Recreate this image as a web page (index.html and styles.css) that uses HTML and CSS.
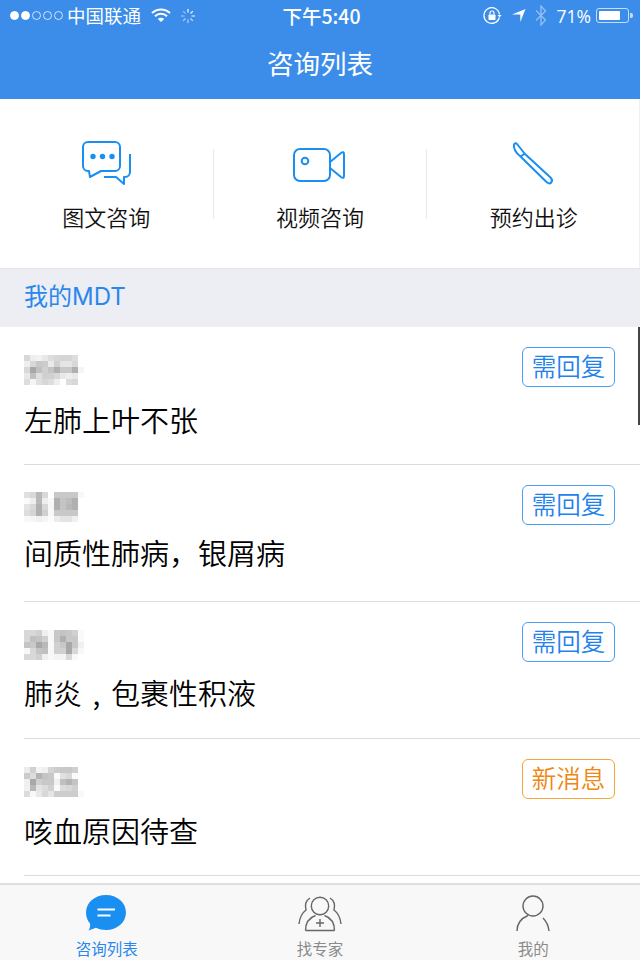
FILE: index.html
```html
<!DOCTYPE html>
<html lang="zh-CN">
<head>
    <meta charset="UTF-8">
    <meta name="viewport" content="width=device-width, initial-scale=1.0">
    <title>咨询列表</title>
    <link rel="stylesheet" href="styles.css">
</head>
<body>
    <header class="top-bar">
        <div class="status-bar">
            <div class="status-left">
                <div class="signal"><i class="on"></i><i class="on"></i><i></i><i></i><i></i></div>
                <span class="carrier">中国联通</span>
                <svg class="wifi" width="20" height="14" viewBox="0 0 20 14">
                    <path d="M1 5a13 13 0 0 1 18 0" fill="none" stroke="#fff" stroke-width="2"/>
                    <path d="M4 8.300a8.600 8.600 0 0 1 12 0" fill="none" stroke="#fff" stroke-width="2"/>
                    <path d="M6.800 11a4.600 4.600 0 0 1 6.400 0L10 14z" fill="#fff"/>
                </svg>
                <svg class="spinner" width="16" height="16" viewBox="0 0 16 16" stroke="#fff" stroke-width="1.200">
                    <path d="M8 1v3.500"/>
                    <path d="M12.900 3.100 10.500 5.500" opacity=".9"/>
                    <path d="M15 8h-3.500" opacity=".8"/>
                    <path d="M12.900 12.900 10.500 10.500" opacity=".7"/>
                    <path d="M8 15v-3.500" opacity=".65"/>
                    <path d="M3.100 12.900 5.500 10.500" opacity=".6"/>
                    <path d="M1 8h3.500" opacity=".5"/>
                    <path d="M3.100 3.100 5.500 5.500" opacity=".45"/>
                </svg>
            </div>
            <div class="status-time">下午5:40</div>
            <div class="status-right">
                <svg class="lock" width="19" height="18" viewBox="0 0 19 18" fill="none">
                    <path d="M16.300 10.500A7.800 7.800 0 1 1 16.500 7.500" stroke="#fff" stroke-width="1.300"/>
                    <path d="M14.600 8h4l-2 2.600z" fill="#fff"/>
                    <rect x="5.500" y="7.500" width="7" height="5.500" rx=".8" fill="#fff"/>
                    <path d="M7 7.500V6a2 2 0 0 1 4 0v1.500" stroke="#fff" stroke-width="1.200"/>
                </svg>
                <svg class="arrow" width="14" height="13" viewBox="0 0 14 13"><path d="M13.500 0 8.300 13V5.500H0z" fill="#fff"/></svg>
                <svg class="bluetooth" width="12" height="21" viewBox="0 0 12 21" fill="none"><path d="M1 5.500 10.500 15 6 20V1l4.500 5L1 15.500" stroke="#fff" stroke-width="1.300" opacity=".45"/></svg>
                <span class="battery-num">71%</span>
                <div class="battery"><div class="battery-fill"></div></div>
                <div class="battery-nub"></div>
            </div>
        </div>
        <h1 class="page-title">咨询列表</h1>
    </header>

    <nav class="actions">
        <a class="action">
            <svg width="52" height="46" viewBox="0 0 52 46" fill="none" stroke="#1a8ff2" stroke-width="2" stroke-linejoin="round">
                <path d="M7 1h27a5 5 0 0 1 5 5v19a5 5 0 0 1-5 5H20l-11 6-1-6H7a5 5 0 0 1-5-5V6a5 5 0 0 1 5-5z"/>
                <path d="M49 13v18a5 5 0 0 1-5 5h-1v7l-8-7H23"/>
                <circle cx="12" cy="15.500" r="2.700" fill="#1a8ff2" stroke="none"/>
                <circle cx="21.500" cy="15.500" r="2.700" fill="#1a8ff2" stroke="none"/>
                <circle cx="31" cy="15.500" r="2.700" fill="#1a8ff2" stroke="none"/>
            </svg>
            <span>图文咨询</span>
        </a>
        <a class="action">
            <svg width="54" height="36" viewBox="0 0 54 36" fill="none" stroke="#1a8ff2" stroke-width="2" stroke-linejoin="round">
                <rect x="2" y="2" width="36" height="32" rx="6"/>
                <circle cx="13" cy="14" r="3.300"/>
                <path d="M38 15 49 6c2-1.500 3-1 3 1.500v21c0 2.500-1 3-3 1.500L38 21"/>
            </svg>
            <span>视频咨询</span>
        </a>
        <a class="action">
            <svg width="44" height="46" viewBox="0 0 44 46" fill="none" stroke="#1a8ff2" stroke-width="2" stroke-linejoin="round">
                <path d="M2 3.500c.8-1.500 2-1.500 3-.5l8 10 25.500 23.500c2 2 2 3.500.7 5s-3 1-4.700-.5L8 15C4 12 1 7 2 3.500z"/>
                <path d="M8.500 15.500 13 12.500"/>
            </svg>
            <span>预约出诊</span>
        </a>
    </nav>

    <div class="section-head">我的MDT</div>

    <ul class="consult-list">
        <li class="consult">
            <div class="mosaic" data-cells="d8 ee f2 e8 dd d8 d5 d5 dd ff|ee d8 c8 cc ea d0 e5 e5 d8 ff|d8 a8 c0 d0 c4 b0 c8 c8 b0 f5|e8 c0 e0 d0 d0 d8 e8 ee e8 ff|dd f5 e0 d8 dd ee ff dd d8 ff"></div>
            <p class="consult-title">左肺上叶不张</p>
            <span class="tag">需回复</span>
        </li>
        <li class="consult">
            <div class="mosaic" data-cells="e0 d8 b8 d8 ff c8 c8 c8 c8 f8|fa ee b8 ee f8 b0 c4 bc b0 ff|e4 d8 b0 d8 f8 b0 c4 b8 b0 ff|dd d4 b0 d0 f8 c8 c8 c8 c8 ff|f8 f5 f0 f5 fc ec e4 e4 f0 ff"></div>
            <p class="consult-title">间质性肺病，银屑病</p>
            <span class="tag">需回复</span>
        </li>
        <li class="consult">
            <div class="mosaic" data-cells="d8 d8 d0 f0 f8 c8 c4 c8 d0 fa|d8 c0 c4 d0 f8 c8 b0 c8 c8 fa|c4 c8 a8 b8 f8 d0 c8 a8 c8 f0|f8 d8 c4 c0 f8 d0 d0 a8 d8 f8|d8 d8 d0 f0 f8 f4 f4 d8 f8 ff"></div>
            <p class="consult-title">肺炎<span class="comma-mid">,</span>包裹性积液</p>
            <span class="tag">需回复</span>
        </li>
        <li class="consult">
            <div class="mosaic" data-cells="ec d0 f4 f0 d4 cc c8 c8 d0 ff|cc dc b4 c4 c8 fa e0 d8 fa ff|f0 a8 d0 c8 c8 f0 c0 b4 c4 ff|f0 b8 e4 dc d0 fa dc d8 d0 ff|dc f8 e8 d8 e4 cc cc cc cc f8"></div>
            <p class="consult-title">咳血原因待查</p>
            <span class="tag tag-new">新消息</span>
        </li>
    </ul>

    <div class="scroll-thumb"></div>

    <footer class="tab-bar">
        <a class="tab tab-active">
            <svg width="42" height="38" viewBox="0 0 42 38">
                <path d="M21 0c11 0 20 7.500 20 17.500S32 35 21 35c-3.500 0-7-.8-10-2.200L3.500 35.500C5 33 5.500 30.500 5 28.500 2.500 25.500 1 22 1 17.500 1 7.500 10 0 21 0z" fill="#1a8ff2"/>
                <path d="M12.500 14.500H30M12.500 20.500h13" stroke="#fff" stroke-width="2" fill="none"/>
            </svg>
            <span>咨询列表</span>
        </a>
        <a class="tab">
            <svg width="46" height="38" viewBox="0 0 46 38" fill="none" stroke="#666" stroke-width="1.400">
                <circle cx="23" cy="11" r="8.700"/>
                <path d="M8.500 35.500c0-8 4.500-13 10-15M37.500 35.500c0-8-4.500-13-10-15M8.500 35.500h29"/>
                <path d="M23 24v8M19 28h8"/>
                <path d="M13 3C8 6 8 11 9 15c-4 3-6.500 9-7 14M33 3c5 3 5 8 4 12 4 3 6.500 9 7 14"/>
            </svg>
            <span>找专家</span>
        </a>
        <a class="tab">
            <svg width="36" height="38" viewBox="0 0 36 38" fill="none" stroke="#666" stroke-width="1.400">
                <circle cx="18" cy="11" r="10"/>
                <path d="M2 36c0-8 5-13 11-15.500M28 23c3 3 5.500 8 6 13"/>
            </svg>
            <span>我的</span>
        </a>
    </footer>

    <script src="mosaic.js"></script>
</body>
</html>
```

FILE: styles.css
```css
* {
    box-sizing: border-box;
}

html, body {
    height: 960px;
}

body {
    margin: 0;
    position: relative;
    overflow: hidden;
    background: #fff;
    color: #111;
    font-family: "Noto Sans CJK SC", "Noto Sans", sans-serif;
}

.top-bar {
    height: 99px;
    background: #3b8de9;
    color: #fff;
}

.status-bar {
    display: grid;
    grid-template-columns: 1fr auto 1fr;
    align-items: center;
    height: 31px;
    padding: 0 7px 0 10px;
    font-size: 18.500px;
}

.status-left, .status-right {
    display: flex;
    align-items: center;
}

.status-right {
    justify-content: flex-end;
}

.signal {
    display: flex;
    gap: 2px;
    margin-right: 4px;
}

.signal i {
    width: 9px;
    height: 9px;
    border: 1px solid rgba(255,255,255,0.75);
    border-radius: 50%;
}

.signal i.on {
    background: #fff;
    border-color: #fff;
}

.carrier {
    line-height: 29px;
}

.wifi {
    margin-left: 10px;
    margin-top: -2px;
}

.spinner {
    margin-left: 9px;
}

.status-time {
    font-weight: 500;
    font-size: 19.500px;
    line-height: 29px;
}

.lock {
    margin-right: 10px;
}

.arrow {
    margin-right: 9px;
}

.bluetooth {
    margin-right: 10px;
}

.battery-num {
    margin-right: 5px;
    font-family: "Open Sans", sans-serif;
    font-size: 17.500px;
}

.battery {
    width: 33px;
    height: 15px;
    padding: 2px;
    border: 1px solid rgba(255,255,255,0.7);
    border-radius: 3px;
}

.battery-fill {
    width: 79%;
    height: 100%;
    background: #fff;
    border-radius: 1px;
}

.battery-nub {
    width: 3px;
    height: 5px;
    margin-left: 1px;
    background: rgba(255,255,255,0.7);
    border-radius: 0 2px 2px 0;
}

.page-title {
    margin: 0;
    height: 68px;
    line-height: 64px;
    text-align: center;
    font-size: 26.500px;
    font-weight: 400;
}

.actions {
    display: flex;
    height: 169px;
    padding-top: 50px;
    background: #fff;
    box-shadow: inset -1px 0 #f0f0f0;
}

.action {
    position: relative;
    flex: 1;
    display: flex;
    flex-direction: column;
    align-items: center;
    font-size: 22px;
    font-weight: 350;
    color: #111;
}

.action svg {
    position: absolute;
    top: -8px;
}

.action span {
    margin-top: 51px;
    line-height: 32px;
}

.action + .action {
    border-left: 1px solid #e8e8e8;
    height: 70px;
}

.action:nth-child(1) svg {
    left: 81px;
}

.action:nth-child(2) svg {
    left: 78px;
    top: -2px;
}

.action:nth-child(3) svg {
    left: 85px;
    top: -8px;
}

.section-head {
    height: 59px;
    padding-left: 24px;
    line-height: 55px;
    background: #eceef3;
    border-top: 1px solid #e2e3e6;
    color: #2a87ee;
    font-family: Inter, "Noto Sans CJK SC", sans-serif;
    font-size: 24px;
}

.consult-list {
    margin: 0;
    padding: 0;
    list-style: none;
}

.consult {
    position: relative;
    height: 137px;
    margin-left: 24px;
    padding-top: 28px;
    border-bottom: 1px solid #dcdcdc;
}

.consult:first-child {
    height: 138px;
}

.mosaic {
    display: grid;
    grid-template-columns: repeat(10, 6px);
    grid-auto-rows: 6px;
    height: 30px;
}

.consult-title {
    margin: 1px 0 0;
    line-height: 66px;
    font-size: 29px;
    font-weight: 350;
    color: #000;
}

/* the names and titles don't sit at the same height in every row */
.consult:nth-child(2) .mosaic {
    margin-top: -1px;
}

.consult:nth-child(2) .consult-title {
    margin-top: -3px;
}

.consult:nth-child(3) .consult-title {
    margin-top: -1px;
}

.consult:nth-child(4) .consult-title {
    margin-top: 0;
}

.comma-mid {
    display: inline-block;
    width: 1em;
    text-align: center;
}

.tag {
    position: absolute;
    top: 20px;
    right: 25px;
    width: 93px;
    height: 40px;
    border: 1.500px solid #4a9df2;
    border-radius: 6px;
    color: #1f82ee;
    font-size: 24.500px;
    font-weight: 350;
    line-height: 35px;
    text-align: center;
}

.tag-new {
    border-color: #f5a33a;
    color: #f0860f;
}

.scroll-thumb {
    position: absolute;
    top: 327px;
    right: 0;
    width: 2px;
    height: 98px;
    background: #444;
}

.tab-bar {
    position: absolute;
    left: 0;
    right: 0;
    bottom: 0;
    display: flex;
    height: 77px;
    background: #f8f8f8;
    border-top: 2px solid #dedede;
}

.tab {
    flex: 1;
    display: flex;
    flex-direction: column;
    align-items: center;
    padding-top: 10px;
    color: #8a8a8a;
    font-size: 15.500px;
}

.tab span {
    line-height: 22px;
    margin-top: 4px;
}

.tab:first-child svg {
    margin-left: -2px;
}

.tab-active {
    color: #2a87ee;
}
```

FILE: mosaic.js
```js
// paints the blurred names from the grey values in data-cells
document.querySelectorAll('.mosaic').forEach(function(box) {
    box.dataset.cells.split('|').forEach(function(row) {
        row.split(' ').forEach(function(v) {
            const cell = document.createElement('div');
            cell.style.background = '#' + v + v + v;
            box.appendChild(cell);
        });
    });
});
```
